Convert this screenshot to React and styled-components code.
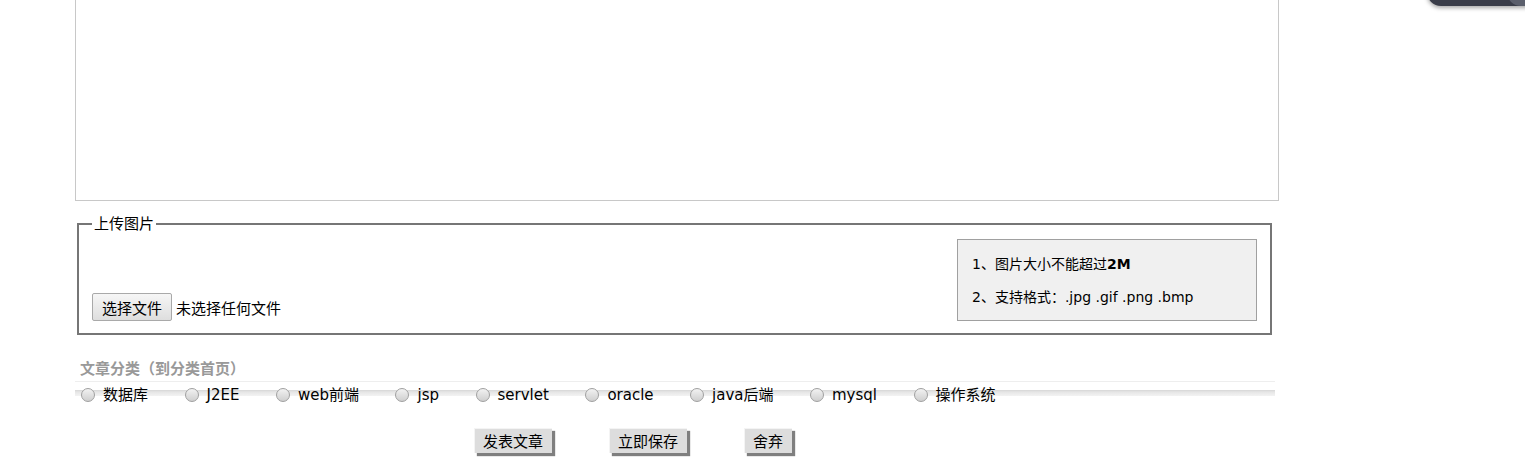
import React from 'react';
import styled, { createGlobalStyle } from 'styled-components';

const GlobalStyle = createGlobalStyle`
    html, body {
        margin: 0;
        padding: 0;
        background: #fff;
        font-family: "DejaVu Sans", "Noto Sans CJK SC", sans-serif;
        color: #000;
        overflow: hidden;
    }
`;

const categories = ['数据库', 'J2EE', 'web前端', 'jsp', 'servlet', 'oracle', 'java后端', 'mysql', '操作系统'];

const App = () => {
    return <StyledPage>
        <GlobalStyle />
        <StyledFloatTab />
        <StyledEditor />

        <StyledFieldset>
            <legend>上传图片</legend>
            <StyledUploadRow>
                <StyledFilePicker>
                    <StyledFileButton type="button">选择文件</StyledFileButton>
                    <span>未选择任何文件</span>
                </StyledFilePicker>
                <StyledTips>
                    <p>1、图片大小不能超过<b>2M</b></p>
                    <p>2、支持格式：.jpg .gif .png .bmp</p>
                </StyledTips>
            </StyledUploadRow>
        </StyledFieldset>

        <StyledCategory>
            <h4>文章分类（到分类首页）</h4>
            <StyledRadioRow>
                {categories.map((c) => (
                    <StyledRadioItem key={c}>
                        <StyledRadio />
                        <span>{c}</span>
                    </StyledRadioItem>
                ))}
            </StyledRadioRow>
        </StyledCategory>

        <StyledActions>
            <StyledActionButton type="button">发表文章</StyledActionButton>
            <StyledActionButton type="button">立即保存</StyledActionButton>
            <StyledActionButton type="button">舍弃</StyledActionButton>
        </StyledActions>
    </StyledPage>;
};

const StyledPage = styled.div`
    position: relative;
    width: 1525px;
    height: 475px;
    padding-left: 75px;
    box-sizing: border-box;
`;

const StyledFloatTab = styled.div`
    position: absolute;
    top: -30px;
    right: -20px;
    width: 118px;
    height: 36px;
    border-radius: 14px;
    background: #3a3d49;
    box-shadow: 0 2px 4px rgba(0, 0, 0, 0.35);
    overflow: hidden;

    &::after {
        content: '';
        position: absolute;
        right: 0;
        top: 0;
        width: 38px;
        height: 100%;
        background: #5b5f6c;
        border-bottom-left-radius: 14px;
    }
`;

const StyledEditor = styled.div`
    width: 1202px;
    height: 200px;
    box-sizing: content-box;
    border: 1px solid #c8c8c8;
    border-top: none;
    background: #fff;
`;

const StyledFieldset = styled.fieldset`
    margin: 13px 0 0 2px;
    width: 1195px;
    box-sizing: border-box;
    border: 2px solid #767676;
    padding: 5px 13px 12px 13px;

    legend {
        font-size: 15px;
        line-height: 20px;
        padding: 0 2px;
    }
`;

const StyledUploadRow = styled.div`
    display: flex;
    justify-content: space-between;
    align-items: flex-end;
`;

const StyledFilePicker = styled.div`
    display: flex;
    align-items: center;
    gap: 4px;
    font-size: 15px;
`;

const StyledFileButton = styled.button`
    width: 80px;
    height: 28px;
    padding: 0;
    font-family: inherit;
    font-size: 15px;
    color: #000;
    border: 1px solid #a9a9a9;
    border-radius: 2px;
    background: linear-gradient(#f6f6f6, #dedede);
`;

const StyledTips = styled.div`
    width: 300px;
    box-sizing: border-box;
    padding: 8px 14px 6px;
    background: #f0f0f0;
    border: 1px solid #a0a0a0;
    font-size: 14px;

    p {
        margin: 0;
        line-height: 33px;
    }
`;

const StyledCategory = styled.div`
    width: 1200px;
    margin-top: 22px;

    h4 {
        margin: 0;
        padding-left: 5px;
        line-height: 24px;
        font-size: 15px;
        color: #999;
        border-bottom: 1px solid #eee;
    }
`;

const StyledRadioRow = styled.div`
    display: flex;
    align-items: center;
    gap: 36.5px;
    height: 22px;
    padding-left: 6px;
    background: linear-gradient(
        to bottom,
        transparent 0,
        transparent 8px,
        #d6d6d6 8px,
        #e6e6e6 10px,
        #f3f3f3 14px,
        transparent 14px
    );
`;

const StyledRadioItem = styled.label`
    display: flex;
    align-items: center;
    gap: 8px;
    font-size: 15px;
    line-height: 22px;

    span {
        position: relative;
        top: 2px;
    }
`;

const StyledRadio = styled.span`
    display: inline-block;
    width: 12px;
    height: 12px;
    border-radius: 50%;
    border: 1px solid #a0a0a0;
    background: linear-gradient(#f2f2f2, #cfcfcf);
`;

const StyledActions = styled.div`
    display: flex;
    gap: 57px;
    margin-top: 24px;
    padding-left: 399px;
`;

const StyledActionButton = styled.button`
    height: 25px;
    padding: 0 9px;
    font-family: inherit;
    font-size: 15px;
    color: #000;
    border: none;
    background: #dddddd;
    box-shadow: inset 1px 1px 0 #f4f4f4, 3px 3px 1px #7f7f7f;
`;

export default App;
